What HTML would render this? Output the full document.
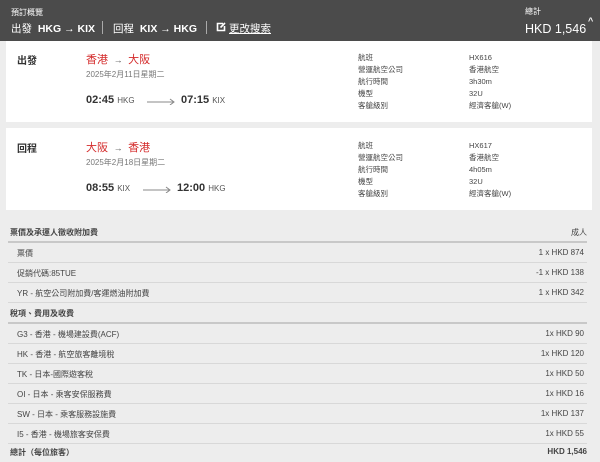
<!DOCTYPE html>
<html><head><meta charset="utf-8"><style>
*{margin:0;padding:0;box-sizing:border-box}
body{width:600px;height:462px;overflow:hidden;background:#ededed;font-family:"Liberation Sans","Noto Sans CJK TC",sans-serif;color:#333;position:relative}
.hdr{position:absolute;left:0;top:0;width:600px;height:41px;background:#4b4b4b;color:#fff}
.abs{position:absolute;white-space:nowrap}
.card{position:absolute;left:6px;width:586px;background:#fff}
.red{color:#d42b2b}
.gray{color:#777}
.k{font-size:7.5px;color:#444}
.row{position:absolute;left:8px;width:579px;height:20px;border-bottom:1px solid #d8d8d8;font-size:8px;color:#444}
.row .l{position:absolute;left:9px;top:5px}
.row .r{position:absolute;right:3px;top:5px}
</style></head><body>
<div class="hdr">
<div class="abs" style="left:11px;top:7px;font-size:8px">預訂概覽</div>
<div class="abs" style="left:11px;top:21px;font-size:10.5px">出發 &nbsp;<b>HKG → KIX</b></div>
<div class="abs" style="left:102px;top:21px;width:1px;height:13px;background:#aaa"></div>
<div class="abs" style="left:113px;top:21px;font-size:10.5px">回程 &nbsp;<b>KIX → HKG</b></div>
<div class="abs" style="left:206px;top:21px;width:1px;height:13px;background:#aaa"></div>
<svg class="abs" style="left:216px;top:22px" width="10" height="10" viewBox="0 0 10 10"><path d="M7 1.5H1.5V8.5H8.5V4" fill="none" stroke="#fff" stroke-width="1.6"/><path d="M4.5 5.5L9 1" stroke="#fff" stroke-width="1.6"/></svg>
<div class="abs" style="left:229px;top:21px;font-size:10.5px;text-decoration:underline">更改搜索</div>
<div class="abs" style="left:525px;top:6px;font-size:8px">總計</div>
<div class="abs" style="left:525px;top:22px;font-size:12.5px">HKD 1,546</div>
<div class="abs" style="left:588px;top:16px;font-size:9px;font-weight:bold">^</div>
</div>

<div class="card" style="top:41px;height:81px">
<div class="abs" style="left:11px;top:11px;font-size:10px;font-weight:bold">出發</div>
<div class="abs red" style="left:80px;top:10px;font-size:11px">香港 <span style="color:#555;font-size:9px">&nbsp;→&nbsp;</span> 大阪</div>
<div class="abs gray" style="left:80px;top:28px;font-size:8px">2025年2月11日星期二</div>
<div class="abs" style="left:80px;top:53px;font-size:11px"><b>02:45</b> <span style="font-size:8px;color:#555">HKG</span></div>
<svg class="abs" style="left:141px;top:56px" width="28" height="8"><path d="M0 5H27M23 2L27 5L23 8" fill="none" stroke="#888" stroke-width="1"/></svg>
<div class="abs" style="left:175px;top:53px;font-size:11px"><b>07:15</b> <span style="font-size:8px;color:#555">KIX</span></div>
<div class="abs k" style="left:352px;top:11px;line-height:12px">航班<br>營運航空公司<br>航行時間<br>機型<br>客艙級別</div>
<div class="abs k" style="left:463px;top:11px;line-height:12px">HX616<br>香港航空<br>3h30m<br>32U<br>經濟客艙(W)</div>
</div>

<div class="card" style="top:128px;height:82px">
<div class="abs" style="left:11px;top:12px;font-size:10px;font-weight:bold">回程</div>
<div class="abs red" style="left:80px;top:11px;font-size:11px">大阪 <span style="color:#555;font-size:9px">&nbsp;→&nbsp;</span> 香港</div>
<div class="abs gray" style="left:80px;top:29px;font-size:8px">2025年2月18日星期二</div>
<div class="abs" style="left:80px;top:54px;font-size:11px"><b>08:55</b> <span style="font-size:8px;color:#555">KIX</span></div>
<svg class="abs" style="left:137px;top:57px" width="28" height="8"><path d="M0 5H27M23 2L27 5L23 8" fill="none" stroke="#888" stroke-width="1"/></svg>
<div class="abs" style="left:171px;top:54px;font-size:11px"><b>12:00</b> <span style="font-size:8px;color:#555">HKG</span></div>
<div class="abs k" style="left:352px;top:12px;line-height:12px">航班<br>營運航空公司<br>航行時間<br>機型<br>客艙級別</div>
<div class="abs k" style="left:463px;top:12px;line-height:12px">HX617<br>香港航空<br>4h05m<br>32U<br>經濟客艙(W)</div>
</div>

<div class="abs" style="left:10px;top:227px;font-size:8px;font-weight:bold;color:#444">票價及承運人徵收附加費</div>
<div class="abs" style="right:13px;top:227px;font-size:8px;color:#444">成人</div>
<div class="abs" style="left:8px;top:241px;width:579px;height:2px;background:#c8c8c8"></div>
<div class="row" style="top:243px"><span class="l">票價</span><span class="r">1 x HKD 874</span></div>
<div class="row" style="top:263px"><span class="l">促銷代碼:85TUE</span><span class="r">-1 x HKD 138</span></div>
<div class="row" style="top:283px"><span class="l">YR - 航空公司附加費/客運燃油附加費</span><span class="r">1 x HKD 342</span></div>
<div class="abs" style="left:10px;top:308px;font-size:8px;font-weight:bold;color:#444">稅項、費用及收費</div>
<div class="abs" style="left:8px;top:322px;width:579px;height:2px;background:#c8c8c8"></div>
<div class="row" style="top:324px"><span class="l">G3 - 香港 - 機場建設費(ACF)</span><span class="r">1x HKD 90</span></div>
<div class="row" style="top:344px"><span class="l">HK - 香港 - 航空旅客離境稅</span><span class="r">1x HKD 120</span></div>
<div class="row" style="top:364px"><span class="l">TK - 日本-國際遊客稅</span><span class="r">1x HKD 50</span></div>
<div class="row" style="top:384px"><span class="l">OI - 日本 - 乘客安保服務費</span><span class="r">1x HKD 16</span></div>
<div class="row" style="top:404px"><span class="l">SW - 日本 - 乘客服務設施費</span><span class="r">1x HKD 137</span></div>
<div class="row" style="top:424px"><span class="l">I5 - 香港 - 機場旅客安保費</span><span class="r">1x HKD 55</span></div>
<div class="abs" style="left:10px;top:447px;font-size:8px;font-weight:bold;color:#444">總計（每位旅客）</div>
<div class="abs" style="right:13px;top:447px;font-size:8px;font-weight:bold;color:#444">HKD 1,546</div>
</body></html>
